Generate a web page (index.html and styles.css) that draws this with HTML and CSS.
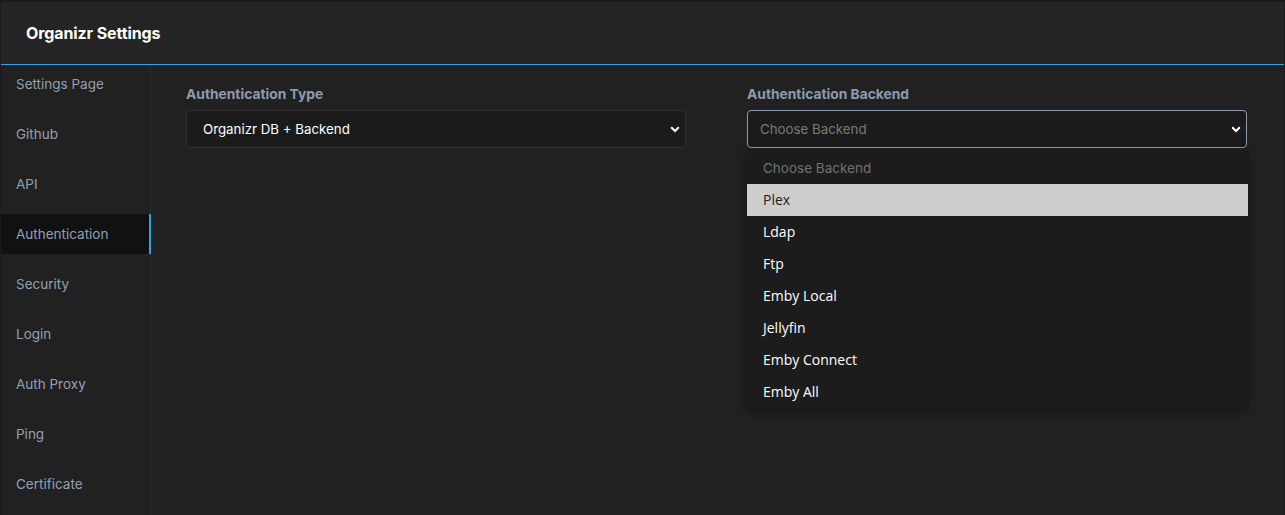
FILE: index.html
```html
<!DOCTYPE html>
<html lang="en">
<head>
<meta charset="utf-8">
<title>Organizr Settings</title>
<link rel="stylesheet" href="styles.css">
</head>
<body>
<div class="panel">
  <div class="panel-head">Organizr Settings</div>
  <div class="panel-body">
    <nav class="side">
      <a class="nav-item">Settings Page</a>
      <a class="nav-item">Github</a>
      <a class="nav-item">API</a>
      <a class="nav-item active">Authentication</a>
      <a class="nav-item">Security</a>
      <a class="nav-item">Login</a>
      <a class="nav-item">Auth Proxy</a>
      <a class="nav-item">Ping</a>
      <a class="nav-item">Certificate</a>
    </nav>
    <main class="content">
      <div class="field">
        <label class="field-label">Authentication Type</label>
        <div class="select">
          <span class="select-value">Organizr DB + Backend</span>
          <svg class="chev" width="10" height="7" viewBox="0 0 10 7"><path d="M1.2 1.3 L5 5 L8.8 1.3" fill="none" stroke="#fff" stroke-width="2"/></svg>
        </div>
      </div>
      <div class="field">
        <label class="field-label">Authentication Backend</label>
        <div class="select-wrap">
          <div class="select focused">
            <span class="select-value placeholder">Choose Backend</span>
            <svg class="chev" width="10" height="7" viewBox="0 0 10 7"><path d="M1.2 1.3 L5 5 L8.8 1.3" fill="none" stroke="#fff" stroke-width="2"/></svg>
          </div>
          <ul class="dropdown">
            <li class="opt disabled">Choose Backend</li>
            <li class="opt hover">Plex</li>
            <li class="opt">Ldap</li>
            <li class="opt">Ftp</li>
            <li class="opt">Emby Local</li>
            <li class="opt">Jellyfin</li>
            <li class="opt">Emby Connect</li>
            <li class="opt">Emby All</li>
          </ul>
        </div>
      </div>
    </main>
  </div>
</div>
</body>
</html>
```

FILE: styles.css
```css
html, body {
  margin: 0;
  height: 100%;
}
body {
  background: #1a1a1a;
  padding: 2px 1px 0 1px;
  box-sizing: border-box;
  font-family: "Inter", "Liberation Sans", sans-serif;
  overflow: hidden;
}
.panel {
  background: #212121;
  height: 100%;
  display: flex;
  flex-direction: column;
}
.panel-head {
  height: 62px;
  background: #242424;
  border-bottom: 1px solid #2ea3ea;
  display: flex;
  align-items: center;
  padding-left: 25px;
  color: #fff;
  font-weight: 700;
  font-size: 16px;
  letter-spacing: -0.1px;
}
.panel-body {
  flex: 1;
  display: flex;
}
.side {
  width: 150px;
  flex: none;
  background: #212121;
  box-shadow: inset -1px 0 0 #2d2d2d;
  display: flex;
  flex-direction: column;
}
.nav-item {
  height: 40px;
  margin-bottom: 10px;
  display: flex;
  align-items: center;
  padding-left: 15px;
  color: #93a0b3;
  font-size: 13.5px;
}
.nav-item:first-child {
  margin-top: -1px;
}
.nav-item.active {
  background: #111111;
  box-shadow: inset -2px 0 0 #2ea3ea;
}
.content {
  flex: 1;
  padding: 20px 37px 0 35px;
  display: grid;
  grid-template-columns: 1fr 1fr;
  column-gap: 61px;
  align-items: start;
}
.field-label {
  display: block;
  color: #8c9bb2;
  font-weight: 700;
  font-size: 13.8px;
  line-height: 18px;
  margin-bottom: 7px;
}
.select-wrap {
  position: relative;
}
.select {
  height: 38px;
  box-sizing: border-box;
  border: 1px solid #323232;
  border-radius: 4px;
  background: #1b1b1b;
  display: flex;
  align-items: center;
  justify-content: space-between;
  padding: 0 5px 0 16px;
}
.select.focused {
  border-color: #8d9ab0;
  padding-left: 12px;
}
.select-value {
  color: #fff;
  font-size: 13.3px;
}
.select-value.placeholder {
  color: #7a7a7a;
}
.chev {
  display: block;
}
.dropdown {
  position: absolute;
  left: -1px;
  right: -1px;
  top: 39px;
  margin: 0;
  padding: 3px 0 0 0;
  list-style: none;
  background: #1c1c1c;
  box-shadow: 0 3px 8px rgba(0, 0, 0, 0.35);
}
.opt {
  height: 32px;
  box-sizing: border-box;
  padding-bottom: 2px;
  display: flex;
  align-items: center;
  padding-left: 17px;
  color: #fff;
  font-family: "Open Sans", "Noto Sans", sans-serif;
  font-weight: 500;
  font-size: 14px;
}
.opt.disabled {
  color: #727272;
  font-family: "Inter", "Liberation Sans", sans-serif;
  font-weight: 400;
  font-size: 13.5px;
  padding-bottom: 0;
}
.opt.hover {
  background: #cdcdcd;
  color: #1e1e1e;
  margin-left: 1px;
  padding-left: 16px;
  font-weight: 400;
}
```
